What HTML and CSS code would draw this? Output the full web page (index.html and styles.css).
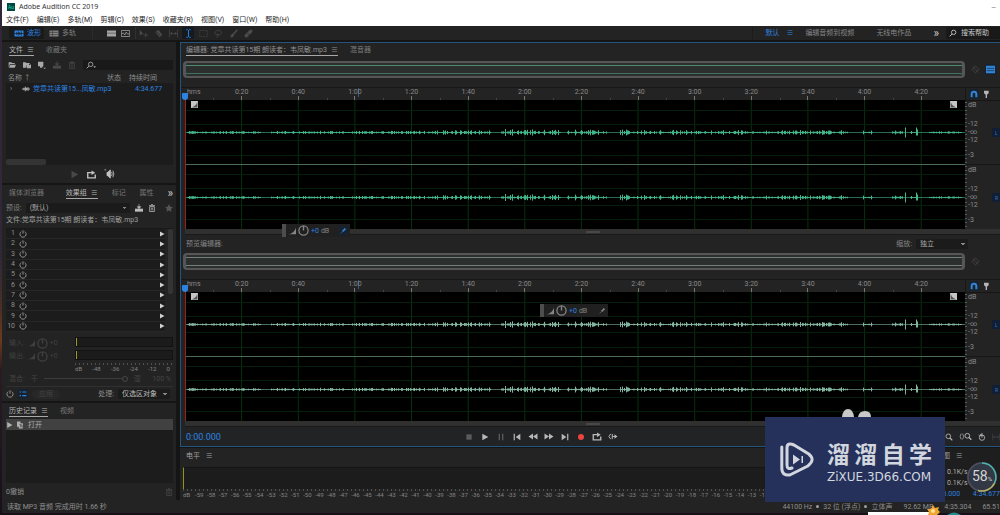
FILE: index.html
```html
<!DOCTYPE html>
<html lang="zh-CN">
<head>
<meta charset="utf-8">
<title>Adobe Audition CC 2019</title>
<link rel="stylesheet" href="styles.css">
</head>
<body>
<svg class="defs" aria-hidden="true">
  <symbol id="wave" viewBox="0 0 12 12"><path d="M0 2h12v8H0z" fill="currentColor"/><path d="M0 6h12M3 4v4M5 3v6M7 4v4M9 3v6" stroke="#161b20"/></symbol>
  <symbol id="audio" viewBox="0 0 12 12"><path d="M0 6h12M3 4v4M5 2.500v7M7 4v4M9 3v6" stroke="currentColor" stroke-width="1.200"/></symbol>
  <symbol id="multi" viewBox="0 0 12 12"><path d="M0 2h12v8H0z" fill="currentColor"/><path d="M0 4.500h12M0 7.500h12M4 2v8" stroke="#333" stroke-width=".8"/></symbol>
  <symbol id="card" viewBox="0 0 12 12"><path d="M0 2h12v8H0z" fill="currentColor"/><path d="M0 5.500h12" stroke="#555"/></symbol>
  <symbol id="spec" viewBox="0 0 12 12"><path d="M.5 2h11v8H.5z" fill="none" stroke="currentColor"/><path d="M1 7l2-2 2 3 2-4 2 3 2-1" fill="none" stroke="currentColor"/></symbol>
  <symbol id="move" viewBox="0 0 12 12"><path d="M1 1v8l2-2h3z" fill="currentColor"/><path d="M6 8h6M9 5v6" stroke="currentColor"/></symbol>
  <symbol id="razor" viewBox="0 0 12 12"><path d="M2 4l4-3 5 7-4 3z" fill="currentColor"/><path d="M4 4l4 5" stroke="#232323"/></symbol>
  <symbol id="slip" viewBox="0 0 12 12"><path d="M.5 1v10M11.500 1v10M2 6h8M4 4L2 6l2 2M8 4l2 2-2 2" fill="none" stroke="currentColor"/></symbol>
  <symbol id="ibeam" viewBox="0 0 12 12"><path d="M3 1h2l1 1 1-1h2M6 2v8M3 11h2l1-1 1 1h2" fill="none" stroke="currentColor" stroke-width="1.300"/></symbol>
  <symbol id="marquee" viewBox="0 0 12 12"><path d="M1 2h10v8H1z" fill="none" stroke="currentColor" stroke-dasharray="2 1.500"/></symbol>
  <symbol id="lasso" viewBox="0 0 12 12"><path d="M3 8C-1 5 3 1 7 2s5 6-2 6c-3 0-2-2 0-1s0 4-2 4" fill="none" stroke="currentColor"/></symbol>
  <symbol id="brush" viewBox="0 0 12 12"><path d="M11 1L6 7" stroke="currentColor" stroke-width="2"/><path d="M5 6l2 2-2 3H1c2-1 1-4 4-5z" fill="currentColor"/></symbol>
  <symbol id="heal" viewBox="0 0 12 12"><path d="M3 9l6-6" stroke="currentColor" stroke-width="4.500" stroke-linecap="round"/><path d="M4.500 5.500l2.500 2.500" stroke="#232323"/></symbol>
  <symbol id="search" viewBox="0 0 12 12"><circle cx="7" cy="5" r="3.300" fill="none" stroke="currentColor" stroke-width="1.300"/><path d="M4.700 7.500L1 11" stroke="currentColor" stroke-width="1.500"/></symbol>
  <symbol id="searchmenu" viewBox="0 0 15 12"><circle cx="7" cy="5" r="3.300" fill="none" stroke="currentColor" stroke-width="1.300"/><path d="M4.700 7.500L1 11" stroke="currentColor" stroke-width="1.500"/><path d="M11 8h4l-2 2.500z" fill="currentColor"/></symbol>
  <symbol id="folder" viewBox="0 0 12 12"><path d="M1 10V2h4l1 1h4v1.500H3z" fill="currentColor"/><path d="M3.500 5.500H12L10 10H1.500z" fill="currentColor"/></symbol>
  <symbol id="import" viewBox="0 0 12 12"><path d="M0 2h4l1 1h4v3H5v4H0z" fill="currentColor"/><path d="M5 6h7v5H6z" fill="currentColor"/><path d="M9 3l2 2v2" fill="none" stroke="currentColor"/></symbol>
  <symbol id="newfile" viewBox="0 0 12 12"><path d="M0 1h8v6L6 10H3V8H0z" fill="currentColor"/><path d="M8 10h4l-2 2z" fill="currentColor"/></symbol>
  <symbol id="tray" viewBox="0 0 12 12"><path d="M0 7h12v4.500H0z" fill="currentColor"/><path d="M6 0v5M3.500 4L6 7l2.500-3z" fill="currentColor" stroke="currentColor"/></symbol>
  <symbol id="trash" viewBox="0 0 12 12"><path d="M2.500 4h7v7.300h-7zM1.500 2.500h9M4.500 1h3" fill="none" stroke="currentColor" stroke-width="1.200"/><path d="M5 5.500v4M7 5.500v4" stroke="currentColor"/></symbol>
  <symbol id="play" viewBox="0 0 12 12"><path d="M2 1l9 5-9 5z" fill="currentColor"/></symbol>
  <symbol id="loop" viewBox="0 0 12 12"><path d="M1 5v5.500h10V6M1 6V3.500h7" fill="none" stroke="currentColor" stroke-width="1.800"/><path d="M6 .5l5 3-5 3z" fill="currentColor"/></symbol>
  <symbol id="speaker" viewBox="0 0 12 12"><path d="M0 1h2M3 4h1l3-3v10L4 8H3z" fill="currentColor" stroke="currentColor" stroke-width="1"/><path d="M8.500 3.500q1.500 2.500 0 5M10 2q2.500 4 0 8" fill="none" stroke="currentColor"/></symbol>
  <symbol id="star" viewBox="0 0 12 12"><path d="M6 0l1.800 4 4.200.5-3 3 .8 4.300L6 9.600l-3.800 2.200.8-4.300-3-3L4.200 4z" fill="currentColor"/></symbol>
  <symbol id="power" viewBox="0 0 12 12"><path d="M3.500 2.300a4.600 4.600 0 1 0 5 0M6 .5V5.500" fill="none" stroke="currentColor" stroke-width="1.500"/></symbol>
  <symbol id="list" viewBox="0 0 12 12"><path d="M1 3h2M1 8.500h2M5 3h6M5 8.500h6" stroke="currentColor" stroke-width="1.800"/></symbol>
  <symbol id="ramp" viewBox="0 0 12 12"><path d="M0 11Q9 10 12 1v10z" fill="currentColor"/></symbol>
  <symbol id="knob" viewBox="0 0 12 12"><circle cx="6" cy="6" r="5" fill="none" stroke="currentColor" stroke-width="1.400"/><path d="M6 1v5" stroke="currentColor" stroke-width="1.500"/></symbol>
  <symbol id="pin" viewBox="0 0 12 12"><path d="M1 11l4-4" stroke="currentColor"/><path d="M3.500 5.500l3 3 1-2 3-2.500L8 1.500 5.500 4.500z" fill="currentColor"/></symbol>
  <symbol id="clip" viewBox="0 0 12 12"><path d="M0 0h6v3h4v9H3V9H0z" fill="currentColor"/><path d="M4 5h4M5 7h4M5 9h5" stroke="#333"/></symbol>
  <symbol id="magnet" viewBox="0 0 12 12"><path d="M2.500 11V6a3.500 3.500 0 0 1 7 0v5" fill="none" stroke="currentColor" stroke-width="3"/></symbol>
  <symbol id="mark" viewBox="0 0 12 12"><path d="M3 1h7v4L7.500 7v5h-2V7L3 5z" fill="currentColor"/></symbol>
  <symbol id="pan" viewBox="0 0 12 12"><path d="M6 1l2 3 3 2-3 2-2 3-2-3-3-2 3-2zM2 2l8 8" fill="none" stroke="currentColor"/></symbol>
  <symbol id="screen" viewBox="0 0 12 12"><path d="M0 1h12v10H0z" fill="currentColor"/><path d="M1 4.500h10M1 7.500h10" stroke="#163353"/></symbol>
  <symbol id="stop" viewBox="0 0 12 12"><path d="M2 2h8v8H2z" fill="currentColor"/></symbol>
  <symbol id="pause" viewBox="0 0 12 12"><path d="M3.500 1v10M8.500 1v10" stroke="currentColor" stroke-width="2"/></symbol>
  <symbol id="prev" viewBox="0 0 12 12"><path d="M1 1h1.800v10H1zM11 1v10L4 6z" fill="currentColor"/></symbol>
  <symbol id="next" viewBox="0 0 12 12"><path d="M9.200 1H11v10H9.200zM1 1v10l7-5z" fill="currentColor"/></symbol>
  <symbol id="rew" viewBox="0 0 12 12"><path d="M6 2v8L0 6zM12 2v8L6 6z" fill="currentColor"/></symbol>
  <symbol id="fwd" viewBox="0 0 12 12"><path d="M0 2v8l6-4zM6 2v8l6-4z" fill="currentColor"/></symbol>
  <symbol id="rec" viewBox="0 0 12 12"><circle cx="6" cy="6" r="4.500" fill="currentColor"/></symbol>
  <symbol id="skip" viewBox="0 0 12 12"><path d="M3 2.500L.5 6 3 9.500M5 2.500v7M5 6h6" fill="none" stroke="currentColor" stroke-width="1.300"/><path d="M8 3l4 3-4 3z" fill="currentColor"/></symbol>
  <symbol id="zoom" viewBox="0 0 12 12"><circle cx="5" cy="5" r="3.500" fill="none" stroke="currentColor" stroke-width="1.300"/><path d="M7.500 7.500L11 11" stroke="currentColor" stroke-width="1.800"/></symbol>
  <symbol id="zoomsel" viewBox="0 0 18 12"><path d="M3 2Q0 6 3 10M5 2q3 4 0 8" fill="none" stroke="currentColor"/><circle cx="11.500" cy="5" r="3.300" fill="none" stroke="currentColor" stroke-width="1.300"/><path d="M14 7.500l3 3" stroke="currentColor" stroke-width="1.800"/></symbol>
  <symbol id="timer" viewBox="0 0 12 12"><circle cx="6" cy="7" r="4" fill="none" stroke="currentColor" stroke-width="1.300"/><path d="M6 0v7M3 2l3 2M1 3l2 2" stroke="currentColor" stroke-width="1.400"/></symbol>
  <symbol id="fade-in" viewBox="0 0 12 12"><path d="M0 0h12v12H0z" fill="#c6c6c6"/><path d="M1 11h10V1q-2 8-10 10" fill="#555"/></symbol>
  <symbol id="fade-out" viewBox="0 0 12 12"><path d="M0 0h12v12H0z" fill="#c6c6c6"/><path d="M11 11H1V1q2 8 10 10" fill="#555"/></symbol>
</svg>

<div class="app">
  <header class="titlebar">
    <span class="logo">Au</span><h1>Adobe Audition CC 2019</h1>
    <button class="minimize" aria-label="最小化">—</button>
  </header>
  <nav class="menubar">
    <button>文件(F)</button><button>编辑(E)</button><button>多轨(M)</button><button>剪辑(C)</button><button>效果(S)</button><button>收藏夹(R)</button><button>视图(V)</button><button>窗口(W)</button><button>帮助(H)</button>
  </nav>
  <div class="toolbar">
    <button class="mode on"><svg><use href="#wave"/></svg>波形</button>
    <button class="mode"><svg><use href="#multi"/></svg>多轨</button>
    <div class="tools views">
      <button class="lit" aria-label="频谱频率"><svg><use href="#card"/></svg></button>
      <button class="lit" aria-label="频谱音调"><svg><use href="#spec"/></svg></button>
    </div>
    <div class="tools">
      <button aria-label="移动"><svg><use href="#move"/></svg></button>
      <button aria-label="切断"><svg><use href="#razor"/></svg></button>
      <button aria-label="滑动"><svg><use href="#slip"/></svg></button>
      <button class="on" aria-label="时间选择"><svg><use href="#ibeam"/></svg></button>
      <button aria-label="框选"><svg><use href="#marquee"/></svg></button>
      <button aria-label="套索"><svg><use href="#lasso"/></svg></button>
      <button aria-label="画笔"><svg><use href="#brush"/></svg></button>
      <button aria-label="修复"><svg><use href="#heal"/></svg></button>
    </div>
    <div class="spaces">
      <button class="on">默认<span>≡</span></button><button>编辑音频到视频</button><button>无线电作品</button><button class="more">»</button>
    </div>
    <label class="help"><svg><use href="#search"/></svg><input type="text" placeholder="搜索帮助" aria-label="搜索帮助"></label>
  </div>

  <div class="workspace">
    <aside class="side">
      <section class="panel files">
        <div class="tabs"><button class="on">文件 <i>≡</i></button><button>收藏夹</button></div>
        <div class="file-tools">
          <button aria-label="打开"><svg><use href="#folder"/></svg></button>
          <button aria-label="导入"><svg><use href="#import"/></svg></button>
          <button aria-label="新建"><svg><use href="#newfile"/></svg></button>
          <button class="off" aria-label="插入"><svg><use href="#tray"/></svg></button>
          <button class="off" aria-label="删除"><svg><use href="#trash"/></svg></button>
          <label><svg class="menu"><use href="#searchmenu"/></svg><input type="text" aria-label="搜索文件"></label>
        </div>
        <div class="file-list">
          <table>
            <thead><tr><th>名称 ↑</th><th>状态</th><th>持续时间</th></tr></thead>
            <tbody><tr><td><span class="tw">›</span><svg><use href="#audio"/></svg>党章共读第15...凤敏.mp3</td><td></td><td>4:34.677</td></tr></tbody>
          </table>
          <div class="hscroll"></div>
        </div>
        <div class="mini-transport">
          <button class="off" aria-label="播放"><svg><use href="#play"/></svg></button>
          <button aria-label="循环"><svg><use href="#loop"/></svg></button>
          <button aria-label="自动播放"><svg class="big"><use href="#speaker"/></svg></button>
        </div>
      </section>

      <section class="panel effects">
        <div class="tabs spread"><button>媒体浏览器</button><button class="on">效果组 <i>≡</i></button><button>标记</button><button>属性</button><button class="more">»</button></div>
        <div class="preset">
          <label for="preset">预设:</label>
          <select id="preset"><option>(默认)</option></select>
          <button aria-label="保存预设"><svg><use href="#tray"/></svg></button>
          <button aria-label="删除预设"><svg><use href="#trash"/></svg></button>
          <button class="off" aria-label="收藏"><svg><use href="#star"/></svg></button>
        </div>
        <p class="file-name">文件:党章共读第15期 朗读者：韦凤敏.mp3</p>
        <div class="rack"><ol id="rack"></ol><div class="vscroll"></div></div>
        <div class="io">
          <div class="io-labels">
            <div><span>输入:</span><svg><use href="#ramp"/></svg><svg class="big"><use href="#knob"/></svg><span>+0</span></div>
            <div><span>输出:</span><svg><use href="#ramp"/></svg><svg class="big"><use href="#knob"/></svg><span>+0</span></div>
          </div>
          <div class="io-meters">
            <div class="bar"></div><div class="bar"></div>
            <div class="ticks"></div>
            <div class="io-scale"><span>dB</span><span>-48</span><span>-36</span><span>-24</span><span>-12</span><span>0</span></div>
          </div>
        </div>
        <div class="mix"><label for="mix">混合:</label><span>干</span><input id="mix" type="range" value="100"><span>湿</span><span>100 %</span></div>
        <div class="process">
          <button aria-label="电源"><svg><use href="#power"/></svg></button>
          <button class="blue" aria-label="列表"><svg><use href="#list"/></svg></button>
          <button class="apply" disabled>应用</button>
          <label for="proc">处理:</label>
          <select id="proc"><option>仅选区对象</option></select>
        </div>
      </section>

      <section class="panel history">
        <div class="tabs"><button class="on">历史记录 <i>≡</i></button><button>视频</button></div>
        <ul><li><svg><use href="#play"/></svg><svg><use href="#clip"/></svg>打开</li></ul>
        <footer><span>0撤销</span><button class="off" aria-label="删除历史"><svg><use href="#trash"/></svg></button></footer>
      </section>
    </aside>

    <main class="main">
      <section class="editor">
        <div class="tabs"><button class="on">编辑器: 党章共读第15期 朗读者：韦凤敏.mp3 <i>≡</i></button><button>混音器</button></div>
        <div class="overview"><div class="range"></div><div class="ov-tools"><svg><use href="#pan"/></svg><button class="blue" aria-label="显示"><svg><use href="#screen"/></svg></button></div></div>
        <div class="ruler"><div class="times"></div><div class="snap"><button class="blue" aria-label="对齐"><svg><use href="#magnet"/></svg></button><svg><use href="#mark"/></svg></div></div>
        <div class="track">
          <div class="canvas">
            <svg class="plot" viewBox="0 0 780 129" preserveAspectRatio="none"></svg>
            <svg class="fade in"><use href="#fade-in"/></svg><svg class="fade out"><use href="#fade-out"/></svg>
            <div class="hud low"><b></b><svg><use href="#ramp"/></svg><svg class="big"><use href="#knob"/></svg><em>+0</em><span>dB</span><button class="blue" aria-label="固定"><svg><use href="#pin"/></svg></button></div>
          </div>
          <div class="axis"></div>
        </div>
        <div class="scroll"><span></span></div>
        <div class="preview-head"><h2>预览编辑器:</h2><label for="zoomsel-box">缩放:</label><select id="zoomsel-box"><option>独立</option></select></div>
        <div class="overview plain"><div class="range"></div><div class="ov-tools"><svg><use href="#pan"/></svg></div></div>
        <div class="ruler"><div class="times"></div><div class="snap"><button class="blue" aria-label="对齐"><svg><use href="#magnet"/></svg></button><svg><use href="#mark"/></svg></div></div>
        <div class="track pale">
          <div class="canvas">
            <svg class="plot" viewBox="0 0 780 129" preserveAspectRatio="none"></svg>
            <svg class="fade in"><use href="#fade-in"/></svg><svg class="fade out"><use href="#fade-out"/></svg>
            <div class="hud mid"><b></b><svg><use href="#ramp"/></svg><svg class="big"><use href="#knob"/></svg><em>+0</em><span>dB</span><button aria-label="固定"><svg><use href="#pin"/></svg></button></div>
          </div>
          <div class="axis"></div>
        </div>
        <div class="scroll"><span></span></div>
        <div class="transport">
          <output>0:00.000</output>
          <div class="keys">
            <button class="off" aria-label="停止"><svg><use href="#stop"/></svg></button>
            <button aria-label="播放"><svg><use href="#play"/></svg></button>
            <button class="off" aria-label="暂停"><svg><use href="#pause"/></svg></button>
            <button aria-label="上一个"><svg><use href="#prev"/></svg></button>
            <button aria-label="快退"><svg class="wide"><use href="#rew"/></svg></button>
            <button aria-label="快进"><svg class="wide"><use href="#fwd"/></svg></button>
            <button aria-label="下一个"><svg><use href="#next"/></svg></button>
            <button class="rec" aria-label="录制"><svg><use href="#rec"/></svg></button>
            <button aria-label="循环播放"><svg class="wide"><use href="#loop"/></svg></button>
            <button aria-label="跳过"><svg class="wide"><use href="#skip"/></svg></button>
          </div>
          <div class="zooms">
            <button aria-label="放大"><svg><use href="#zoom"/></svg></button>
            <button aria-label="缩放选区"><svg class="long"><use href="#zoomsel"/></svg></button>
            <button aria-label="计时"><svg><use href="#timer"/></svg></button>
            <button class="off" aria-label="全部"><svg><use href="#slip"/></svg></button>
          </div>
        </div>
      </section>
      <div class="bottom">
        <section class="levels">
          <h2>电平 <i>≡</i></h2>
          <div class="meter"></div>
          <div class="ticks"></div>
          <div class="scale" id="scale"></div>
        </section>
        <section class="selection">
          <h2>视图 <i>≡</i></h2>
          <p>0.1K/s</p><p>0.1K/s</p>
          <div><span>0:00.000</span><span>4:34.677</span></div>
        </section>
      </div>
    </main>
  </div>
  <footer class="status">
    <span>读取 MP3 音频 完成用时 1.66 秒</span>
    <span class="fmt">44100 Hz<b></b>32 位 (浮点)<b></b>立体声</span><span>92.62 MB</span><span>4:35.304</span><span>65.51</span>
  </footer>
</div>

<div class="gauge"><svg viewBox="0 0 32 32"><circle cx="16" cy="16" r="15" fill="#333845"/><circle cx="16" cy="16" r="14" fill="none" stroke="#4b505c" stroke-width="1.500"/><path d="M16 2a14 14 0 0 1 12.500 20" fill="none" stroke="#4bb4ae" stroke-width="1.500"/><path d="M28.500 22A14 14 0 0 1 12 29.500" fill="none" stroke="#b8b468" stroke-width="1.500"/></svg><span>58<small>%</small></span></div>
<div class="watermark">
  <svg class="ears" viewBox="0 0 30 8"><path d="M0 8Q1 0 6 0t6 8zM16 8q1-6 7-6t6 6z" fill="#c9c9c9"/></svg>
  <svg class="wm-logo" viewBox="0 0 34 36"><path d="M1.800 5v21q0 8 8 7l18-9q8-6 1-12L14 3Q7 0 7 6v17q0 5 5 3" fill="none" stroke="#d2d6df" stroke-width="3" stroke-linejoin="round" stroke-linecap="round"/><path d="M13 12.500v10l7-5zM21.500 14H23v7h-1.500z" fill="#d2d6df"/></svg>
  <div><strong><span>溜</span><span>溜</span><span>自</span><span>学</span></strong><p>ZiXUE.3D66.COM</p></div>
</div>
<div class="dock"><svg viewBox="0 0 104 10"><path d="M0 7h66v3H0z" fill="#fff"/><path d="M65 0l2 3 4-1-1 3 2 2-3 3h-9l1-3-2-3 4 0z" fill="#f2a52e"/><circle cx="65" cy="6" r="2" fill="#ffe39a"/><path d="M79 10q7-5 14 0z" fill="#248d92"/></svg></div>
<script src="script.js"></script>
</body>
</html>
```
FILE: styles.css
```css
* { box-sizing: border-box; }
body { margin: 0; min-height: 100vh; position: relative; overflow: hidden; padding: 0 0 2px 2px; background: linear-gradient(#302838 0 50%, #4a3024 60%, #6b3a1e 66%, #2a1a24 72%, #181019); color: #8f8f8f; font: 7px/10px Roboto, "Noto Sans CJK SC", sans-serif; }
h1, h2, p, ul, ol { margin: 0; padding: 0; font-size: 7px; font-weight: 400; list-style: none; }
button, input, select { margin: 0; padding: 0; border: 0; background: none; color: inherit; font: inherit; }
button { display: inline-flex; align-items: center; white-space: nowrap; }
i, em { font-style: normal; }
svg { display: block; width: 8px; height: 8px; flex: none; }
svg.big { width: 11px; height: 11px; }
svg.wide { width: 9px; height: 9px; }
svg.long { width: 13px; height: 9px; }
svg.menu { width: 10px; height: 8px; }
.defs { position: absolute; width: 0; height: 0; }
.off { color: #484848; }
.more { color: #c8c8c8; font-size: 12px; }
.app { background: #151515; display: flex; flex-direction: column; }

.titlebar { display: flex; align-items: center; gap: 4px; height: 14px; padding: 0 4px 0 5px; background: #fff; color: #333; }
.titlebar h1 { flex: 1; font-family: "Noto Sans", sans-serif; }
.logo { width: 8px; height: 8px; background: #00473f; color: #1fd3b2; font-size: 5px; line-height: 8px; text-align: center; }
.minimize { color: #444; font-size: 6px; }
.menubar { display: flex; gap: 8px; height: 12px; padding-left: 4px; background: #fff; color: #262626; }

.toolbar { display: flex; align-items: center; height: 14px; margin-bottom: 2px; padding-left: 7px; background: #232323; color: #858585; }
.mode { gap: 3px; height: 12px; padding: 0 3px 0 5px; }
.mode svg { width: 10px; height: 9px; }
.mode.on { background: #181a1c; color: #2d83e0; }
.tools { display: flex; gap: 3px; height: 12px; padding-left: 1px; color: #4b4b4b; }
.tools button { width: 12px; justify-content: center; }
.tools svg { width: 9px; height: 9px; }
.tools .on { background: #151a20; color: #2d83e0; }
.tools .lit { color: #a5a5a5; }
.views { margin-left: 13px; padding: 0 4px 0 12px; border-left: 1px solid #2c2c2c; border-right: 1px solid #303030; }
.views { gap: 2px; }
.spaces { display: flex; align-items: center; gap: 22px; margin-left: auto; padding: 0 7px 0 12px; border-left: 1px solid #1b1b1b; }
.spaces button { height: 12px; }
.spaces .on { color: #2d83e0; gap: 7px; margin-right: -10px; }
.help { display: flex; align-items: center; gap: 4px; width: 54px; height: 12px; padding-left: 3px; background: #191919; color: #c8c8c8; }
.help input { width: 38px; }
.help input::placeholder { color: #c8c8c8; }

.workspace { display: grid; grid-template-columns: 174px 1fr; gap: 4px; }
.side { display: flex; flex-direction: column; gap: 2px; min-width: 0; }
.panel { background: #232323; padding: 0 3px 0 4px; display: flex; flex-direction: column; }
.tabs { display: flex; align-items: center; gap: 12px; height: 16px; padding-left: 3px; color: #777; }
.tabs button { height: 12px; border-bottom: 1px solid transparent; }
.tabs i { margin-left: 4px; }
.tabs .on { color: #b5b5b5; border-color: #a8a8a8; }
.tabs.spread { justify-content: space-between; gap: 0; }
.tabs.spread .on { margin-left: 8px; }

.files { height: 141px; }
.file-tools { display: flex; align-items: center; gap: 7px; height: 14px; padding-left: 2px; color: #a9a9a9; }
.file-tools .off { color: #484848; }
.file-tools label { flex: 1; display: flex; align-items: center; height: 10px; padding-left: 3px; background: #191919; }
.file-tools input { width: 70px; }
.file-list { flex: 1; display: flex; flex-direction: column; justify-content: space-between; background: #1c1c1c; }
table { width: 100%; border-collapse: collapse; table-layout: fixed; }
th, td { padding: 0; font-weight: 400; text-align: left; white-space: nowrap; height: 11px; }
th { background: #232323; padding-left: 2px; }
th:first-child { width: 99px; }
th:nth-child(2) { width: 22px; }
td { color: #2d83e0; }
td:last-child { padding-left: 8px; }
td svg { display: inline-block; vertical-align: middle; margin: 0 3px 0 10px; color: #ccc; }
.tw { padding-left: 4px; color: #999; }
.hscroll { width: 40px; height: 6px; border-radius: 2px; background: #343434; }
.mini-transport { display: flex; justify-content: center; align-items: center; gap: 8px; height: 18px; padding-left: 5px; color: #c3c3c3; }
.mini-transport svg { width: 9px; height: 9px; }
.mini-transport svg.big { width: 11px; height: 10px; }

.effects { height: 216px; }
.preset { display: flex; align-items: center; gap: 4px; height: 14px; color: #808080; }
select { appearance: none; padding-right: 10px; color: #a8a8a8; background-color: #1b1b1b; background-image: linear-gradient(45deg, transparent 50%, #888 50%), linear-gradient(-45deg, transparent 50%, #888 50%); background-size: 2px 2px; background-position: right 5px center, right 3px center; background-repeat: no-repeat; height: 10px; padding-left: 4px; }
.preset select { flex: 1; }
.preset button { color: #bbb; margin-left: 1px; }
.preset .off { color: #555; margin-left: 5px; }
.file-name { height: 13px; color: #a0a0a0; white-space: nowrap; }
.rack { display: flex; gap: 3px; height: 105px; padding-bottom: 1px; border-top: 1px solid #191919; }
.rack ol { flex: 1; display: flex; flex-direction: column; background: #1c1c1c; }
.rack li { flex: 1; display: flex; align-items: center; gap: 4px; border-bottom: 1px solid #272727; }
.rack li span { width: 9px; text-align: right; line-height: 9px; }
.rack li svg { width: 8px; height: 8px; }
.rack li svg:last-child { width: 6px; height: 6px; margin-left: auto; color: #d0d0d0; }
.vscroll { width: 5px; height: 65px; background: #343434; border-radius: 2px; }
.io { display: flex; gap: 4px; padding: 4px 0 0 3px; height: 38px; color: #404040; }
.io-labels { width: 62px; display: flex; flex-direction: column; gap: 1px; }
.io-labels div { display: flex; align-items: center; gap: 2px; height: 12px; }
.io-meters { flex: 1; }
.bar { height: 10px; margin-bottom: 3px; background: linear-gradient(90deg, #9a9a24 0 1px, transparent 1px), #1b1b1b; border: 1px solid #121212; }
.ticks { height: 2px; background: repeating-linear-gradient(90deg, #4f4f4f 0 1px, transparent 1px 4px); }
.io-scale { display: flex; justify-content: space-between; font-size: 6px; line-height: 7px; color: #858585; padding-right: 3px; }
.mix { display: flex; align-items: center; gap: 6px; height: 16px; padding: 0 2px 0 3px; color: #434343; border-bottom: 1px solid #303030; }
.mix span:nth-of-type(3) { margin-left: auto; }
input[type=range] { appearance: none; width: 84px; height: 8px; background: linear-gradient(#3c3c3c, #3c3c3c) center / 100% 1px no-repeat; }
input[type=range]::-webkit-slider-thumb { appearance: none; width: 6px; height: 6px; border: 1px solid #484848; border-radius: 50%; background: #232323; }
.process { display: flex; align-items: center; gap: 4px; flex: 1; padding: 0 3px 0 0; }
.blue { color: #3384d4; background: #172230; padding: 1px; }
.apply { width: 28px; height: 9px; justify-content: center; border-radius: 5px; background: #282828; color: #444; }
.process label { margin-left: auto; }
.process select { width: 52px; color: #bbb; }

.history { height: 97px; }
.history ul { flex: 1; background: #1c1c1c; }
.history li { display: flex; align-items: center; gap: 4px; height: 11px; background: #414141; color: #b0b0b0; }
.history li svg { width: 7px; height: 8px; }
.history footer { display: flex; align-items: center; justify-content: space-between; height: 17px; }

.main { display: flex; flex-direction: column; gap: 1px; min-width: 0; }
.editor { border: 1px solid #24547c; border-right: 0; background: #232323; }
.editor > .tabs { height: 18px; padding: 0 0 4px 5px; color: #7c7c7c; }
.editor > .tabs .on { color: #919191; }
.overview, .ruler, .track { display: grid; grid-template-columns: 1fr 35px; }
.overview { padding-left: 2px; margin-bottom: 9px; }
.range { height: 17px; border: 2px solid #565656; border-left-width: 3px; border-right-width: 3px; border-radius: 4px; background: linear-gradient(#508970, #508970) 0 2px / 100% 1px no-repeat, linear-gradient(#436d5d, #436d5d) 0 10px / 100% 1px no-repeat, #2b302f; }
.plain .range { background: linear-gradient(#737d79, #737d79) 0 2px / 100% 1px no-repeat, linear-gradient(#737d79, #737d79) 0 10px / 100% 1px no-repeat, #2b302f; }
.ov-tools { display: flex; align-items: center; gap: 5px; padding-left: 6px; color: #434343; }
.ov-tools svg { width: 9px; height: 9px; }
.ruler { height: 13px; padding-left: 4px; border-top: 1px solid #171717; }
.times { position: relative; display: flex; overflow: hidden; background: linear-gradient(#286097, #286097) 173px 0 / 1px 9px no-repeat; color: #898989; }
.times span { flex: 0 0 7.26%; text-align: center; line-height: 9px; background: linear-gradient(#777, #777) center bottom / 1px 4px no-repeat, linear-gradient(#444, #444) left bottom / 1px 2px no-repeat; }
.times span:first-child { flex-basis: 3.63%; padding-left: 2px; text-align: left; background: none; }
.track .canvas::before { content: ""; position: absolute; left: -3px; top: -7px; width: 6px; height: 7px; background: #2d83e0; border-radius: 1px 1px 3px 3px; }
.snap { display: flex; align-items: center; gap: 3px; padding-left: 3px; border-left: 1px solid #171717; color: #b5b5b5; }
.track { padding-left: 4px; }
.canvas { position: relative; background: #000; }
.plot { width: 100%; height: 129px; color: #42b58a; }
.pale .plot { color: #82b49f; }
.fade { position: absolute; top: 1px; width: 7px; height: 7px; }
.fade.in { left: 6px; }
.fade.out { right: 8px; }
.hud { position: absolute; z-index: 1; display: flex; align-items: center; gap: 2px; width: 68px; height: 13px; padding-right: 2px; background: #202020; color: #858585; }
.hud b { width: 4px; height: 13px; background: #4d4d4d; }
.hud em { color: #2d83e0; }
.hud button { margin-left: auto; }
.hud button svg { width: 7px; height: 7px; }
.low { left: 97px; bottom: -8px; }
.mid { left: 355px; top: 12px; }
.axis svg { width: 35px; height: 129px; font-size: 7px; }
.scroll { display: flex; justify-content: center; align-items: center; height: 6px; margin: 0 0 0 4px; background: #303030; border-bottom: 1px solid #191919; }
.scroll span { width: 14px; height: 2px; background: #484848; }
.preview-head { display: flex; align-items: center; gap: 4px; height: 18px; padding: 0 32px 0 5px; color: #858585; }
.preview-head h2 { flex: 1; }
.preview-head select { width: 52px; }
.transport { display: flex; align-items: center; height: 19px; padding-left: 5px; background: #212325; color: #b7b7b7; }
.transport output { flex: 0 0 34%; color: #2d83e0; font-size: 9px; }
.keys { display: flex; gap: 4px; }
.keys button { width: 12px; height: 12px; justify-content: center; }
.keys svg { width: 8px; height: 8px; }
.keys svg.wide { width: 10px; height: 9px; }
.keys .off { color: #5a5a5a; }
.keys .rec { color: #e8463c; }
.zooms { flex: 1; display: flex; justify-content: flex-end; align-items: center; gap: 6px; overflow: hidden; }

.bottom { display: flex; gap: 2px; }
.levels { flex: 1; height: 52px; padding: 0 0 0 3px; background: #232323; }
.levels h2, .selection h2 { height: 19px; padding: 3px 0 0 3px; color: #a0a0a0; }
.levels i, .selection i { margin-left: 4px; }
.meter { height: 22px; background: #1c1c1c; border-top: 1px solid #151515; border-left: 1px solid #8c971c; }
.scale { display: flex; font-size: 6px; line-height: 8px; color: #838383; }
.scale span { flex: 1 1 0; min-width: 0; }
.selection { width: 94px; padding-left: 6px; background: #1e1e1e; color: #b0b0b0; }
.selection h2 { padding-left: 24px; }
.selection p { padding-left: 35px; line-height: 11px; }
.selection div { display: flex; justify-content: space-between; padding-left: 21px; color: #2d83e0; }
.status { display: flex; align-items: center; gap: 11px; height: 13px; padding-left: 5px; background: #232323; white-space: nowrap; color: #8f8f8f; }
.fmt { margin-left: auto; display: flex; align-items: center; gap: 4px; }
.fmt b { width: 3px; height: 3px; border-radius: 50%; background: #a0a0a0; }

.watermark { position: absolute; z-index: 3; right: 55px; top: 417px; display: flex; align-items: center; gap: 13px; width: 180px; height: 85px; padding-left: 15px; background: #25315a; color: #d2d6df; }
.watermark div { width: 105px; }
.watermark strong { display: flex; justify-content: space-between; font: 700 23px/34px "Noto Sans CJK SC", sans-serif; }
.watermark p { font: 12px/14px "DejaVu Sans", sans-serif; }
.wm-logo { width: 34px; height: 36px; }
.ears { position: absolute; left: 77px; top: -8px; width: 30px; height: 8px; }
.gauge { position: absolute; z-index: 3; right: 2px; top: 461px; display: grid; place-items: center; color: #d5d5d5; font-size: 14px; line-height: 16px; }
.gauge svg { width: 32px; height: 32px; }
.gauge > * { grid-area: 1 / 1; }
.gauge small { font-size: 6px; }
.dock { position: absolute; z-index: 4; right: 28px; bottom: 0; }
.dock svg { width: 104px; height: 10px; }
```
FILE: script.js
```js
const rack = document.getElementById('rack');
for (let i = 1; i <= 10; i++) {
  rack.insertAdjacentHTML('beforeend', `<li><span>${i}</span><svg><use href="#power"/></svg><svg><use href="#play"/></svg></li>`);
}

// Time ruler: one label every 20 seconds
const labels = ['hms'];
for (let s = 20; s <= 260; s += 20) labels.push(`${Math.floor(s / 60)}:${String(s % 60).padStart(2, '0')}`);
document.querySelectorAll('.times').forEach(el => {
  el.innerHTML = labels.map(t => `<span>${t}</span>`).join('');
});

// Speech passages: start, end, peak amplitude
const passages = [
  [2, 76, 1], [86, 240, 1.2], [242, 306, 1.8], [316, 376, 3], [382, 422, 2.4],
  [435, 472, 2.6], [474, 560, 2.2], [560, 663, 2], [678, 688, 2],
  [707, 718, 1.4], [725, 731, 1.4], [744, 777, .8]
];
function wave(mid) {
  let seed = 41, d = '';
  for (const [a, b, amp] of passages) {
    for (let x = a; x < b; x++) {
      seed = (seed * 16807) % 2147483647;
      const r = seed / 2147483647;
      const h = r < 0.3 ? 0.4 : 0.5 + amp * r * r * r;
      d += `M${x + .5} ${(mid - h).toFixed(1)}V${(mid + h).toFixed(1)}`;
    }
  }
  return d + `M720.5 ${mid - 5}v10M731.5 ${mid - 5}v8M732.5 ${mid - 3}v6`;
}
document.querySelectorAll('.plot').forEach(svg => {
  let grid = '';
  for (let i = 1; i <= 13; i++) grid += `M${(i * 56.63).toFixed(1)} 0V129`;
  let rows = '';
  for (const y of [10, 24, 40, 55, 74, 88, 105, 119]) rows += `M0 ${y + 0.5}H780`;
  svg.innerHTML = `<path d="${grid}" stroke="#06310f"/><path d="${rows}" stroke="#04200c"/>
    <path d="M0 64.5H780" stroke="#4c6c55"/>
    <path d="M0 32.5H780M0 97.5H780" stroke="currentColor" stroke-opacity=".6"/>
    <path d="${wave(32.5)}${wave(97.5)}" stroke="currentColor"/><path d="M.5 0V129" stroke="#a31d1d"/>`;
});

document.querySelectorAll('.axis').forEach(el => {
  let out = '';
  for (const [top, ch] of [[0, 'L'], [65, 'R']]) {
    for (const [y, t] of [[5, 'dB'], [24, '-12'], [32, '-∞'], [40, '-12'], [55, '-3']]) {
      out += `<text x="3" y="${top + y + 2}" fill="#8c8c8c">${t}</text>`;
    }
    out += `<rect x="27" y="${top + 28}" width="8" height="9" fill="#121e36"/><text x="30" y="${top + 35}" fill="#3672b5" font-size="5">${ch}</text>`;
  }
  let ticks = '';
  for (let y = 2; y < 129; y += 4) ticks += `M0 ${y + 0.5}h2`;
  el.innerHTML = `<svg viewBox="0 0 35 129"><path d="${ticks}" stroke="#5a5a5a"/><path d="M2 64.5H35M0 .5H35" stroke="#161616"/>${out}</svg>`;
});

// Level meter scale
let scale = '<span>dB</span>';
for (let v = 59; v > 0; v--) scale += `<span>-${v}</span>`;
document.getElementById('scale').innerHTML = scale;
```
